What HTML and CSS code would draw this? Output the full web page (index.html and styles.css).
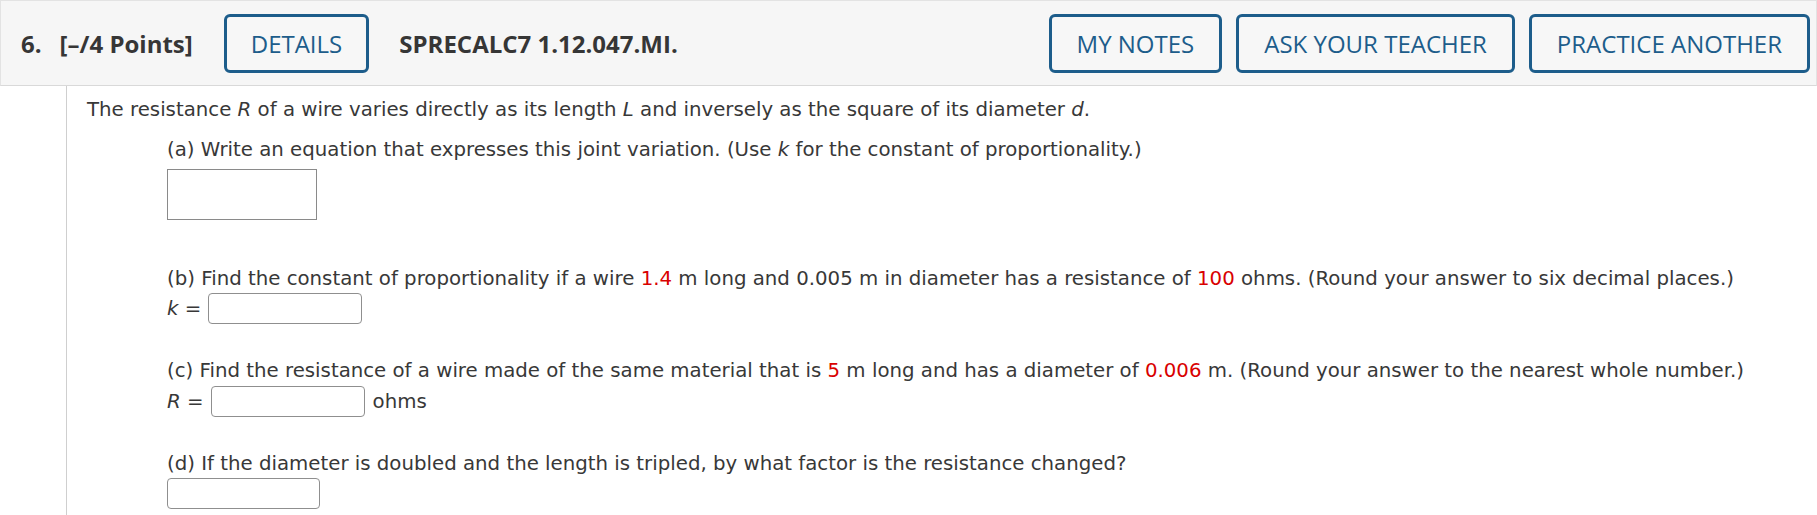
FILE: index.html
```html
<!DOCTYPE html>
<html lang="en">
<head>
<meta charset="utf-8">
<title>Question 6</title>
<link rel="stylesheet" href="styles.css">
</head>
<body>
<div class="page">
  <header class="qhead">
    <div class="qtitle"><span class="qnum">6.</span>[–/4 Points]</div>
    <button class="btn details">DETAILS</button>
    <div class="qcode">SPRECALC7 1.12.047.MI.</div>
    <div class="actions">
      <button class="btn">MY NOTES</button>
      <button class="btn">ASK YOUR TEACHER</button>
      <button class="btn">PRACTICE ANOTHER</button>
    </div>
  </header>
  <main class="qbody">
    <p class="intro">The resistance <i>R</i> of a wire varies directly as its length <i>L</i> and inversely as the square of its diameter <i>d</i>.</p>
    <div class="parts">
      <p class="ptext pa">(a) Write an equation that expresses this joint variation. (Use <i>k</i> for the constant of proportionality.)</p>
      <div class="box box-a"></div>

      <p class="ptext pb">(b) Find the constant of proportionality if a wire <span class="red">1.4</span> m long and 0.005 m in diameter has a resistance of <span class="red">100</span> ohms. (Round your answer to six decimal places.)</p>
      <div class="row row-b"><span class="lbl"><i>k</i> =</span><div class="box box-s"></div></div>

      <p class="ptext pc">(c) Find the resistance of a wire made of the same material that is <span class="red">5</span> m long and has a diameter of <span class="red">0.006</span> m. (Round your answer to the nearest whole number.)</p>
      <div class="row row-c"><span class="lbl"><i>R</i> =</span><div class="box box-s"></div><span class="unit">ohms</span></div>

      <p class="ptext pd">(d) If the diameter is doubled and the length is tripled, by what factor is the resistance changed?</p>
      <div class="row row-d"><div class="box box-s box-d"></div></div>
    </div>
  </main>
</div>
</body>
</html>
```
FILE: styles.css
```css
html, body {
  margin: 0;
  padding: 0;
  background: #ffffff;
}

.page {
  width: 1817px;
  height: 515px;
  overflow: hidden;
}

.qhead {
  box-sizing: border-box;
  height: 86px;
  display: flex;
  align-items: center;
  padding: 0 6px 0 20px;
  background: #f6f6f6;
  border: 1px solid #e3e3e3;
  border-bottom-color: #d9d9d9;
  font-family: "Open Sans", "Liberation Sans", sans-serif;
  color: #363636;
}

.qtitle {
  font-weight: 700;
  font-size: 24px;
  white-space: nowrap;
}

.qnum {
  margin-right: 18px;
}

.btn {
  box-sizing: border-box;
  height: 59px;
  padding: 0 25px;
  border: 3px solid #1d5d8b;
  border-radius: 6px;
  background: #f7f7f7;
  color: #1d5d8b;
  font-family: "Open Sans", "Liberation Sans", sans-serif;
  font-size: 24px;
  font-weight: 400;
  white-space: nowrap;
  cursor: pointer;
}

.details {
  margin-left: 31px;
  padding: 0 24px;
}

.qcode {
  margin-left: 30px;
  font-weight: 700;
  font-size: 24px;
  white-space: nowrap;
}

.actions {
  margin-left: auto;
  display: flex;
  gap: 14px;
}

.qbody {
  margin-left: 66px;
  border-left: 1px solid #cfcfcf;
  height: 429px;
  box-sizing: border-box;
  padding: 12px 0 0 20px;
  font-family: "DejaVu Sans", Verdana, sans-serif;
  font-size: 19.75px;
  line-height: 24px;
  color: #383838;
}

.intro {
  margin: 0 0 16px 0;
  white-space: nowrap;
}

.parts {
  padding-left: 80px;
}

.ptext {
  margin: 0;
  white-space: nowrap;
}

.pa { margin-bottom: 7px; }
.pb { margin-bottom: 2px; }
.pc { margin-bottom: 3px; }
.pd { margin-bottom: 2px; }

.red {
  color: #d90000;
}

.box {
  box-sizing: border-box;
  background: #ffffff;
}

.box-a {
  width: 150px;
  height: 51px;
  border: 1px solid #8a8a8a;
  margin-bottom: 47px;
}

.row {
  display: flex;
  align-items: center;
  height: 31px;
}

.row-b, .row-c {
  margin-bottom: 35px;
}

.lbl {
  margin-right: 7px;
  white-space: nowrap;
}

.box-s {
  width: 154px;
  height: 31px;
  border: 1px solid #8f8f8f;
  border-radius: 4px;
}

.box-d {
  width: 153px;
}

.unit {
  margin-left: 8px;
}
```
